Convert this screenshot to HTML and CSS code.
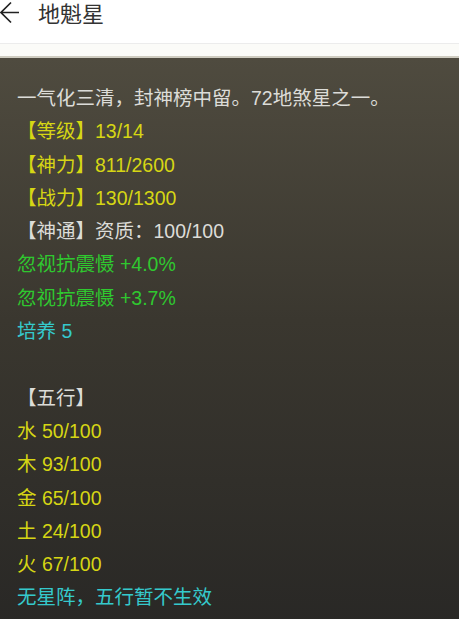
FILE: index.html
```html
<!DOCTYPE html>
<html lang="zh-CN">
  <head>
    <meta charset="UTF-8" />
    <meta name="viewport" content="width=device-width, initial-scale=1.0" />
    <title>地魁星</title>
    <link rel="stylesheet" href="styles.css">
  </head>
  <body>
    <div class="top-bar">
      <svg class="back-icon" width="20" height="26" viewBox="0 0 20 26">
        <path d="M19 12.5H1.2M11 2.5L1 12.5L11 22.5" fill="none" stroke="#222" stroke-width="1.7" />
      </svg>
      <div class="title">地魁星</div>
    </div>
    <div class="top-gap"></div>

    <div class="star-panel">
      <div class="line text-white">一气化三清，封神榜中留。72地煞星之一。</div>
      <div class="line text-yellow">【等级】13/14</div>
      <div class="line text-yellow">【神力】811/2600</div>
      <div class="line text-yellow">【战力】130/1300</div>
      <div class="line text-white">【神通】资质：100/100</div>
      <div class="line text-green">忽视抗震慑 +4.0%</div>
      <div class="line text-green">忽视抗震慑 +3.7%</div>
      <div class="line text-cyan">培养 5</div>
      <div class="line"></div>
      <div class="line text-white">【五行】</div>
      <div class="line text-yellow">水 50/100</div>
      <div class="line text-yellow">木 93/100</div>
      <div class="line text-yellow">金 65/100</div>
      <div class="line text-yellow">土 24/100</div>
      <div class="line text-yellow">火 67/100</div>
      <div class="line text-cyan">无星阵，五行暂不生效</div>
    </div>
  </body>
</html>
```

FILE: styles.css
```css
body {
  margin: 0;
  font-family: "Liberation Sans", "Noto Sans CJK SC", sans-serif;
  background-color: #262523;
}
.top-bar {
  height: 43px;
  background-color: #fff;
  border-bottom: 1px solid #ececec;
  display: flex;
  align-items: flex-start;
}
.back-icon {
  flex-shrink: 0;
}
.title {
  margin-left: 18px;
  font-family: "Noto Sans CJK SC", sans-serif;
  font-size: 22px;
  line-height: 25px;
  color: #333;
}
.top-gap {
  height: 12px;
  background-color: #fbfbf8;
  border-bottom: 2px solid #cfccc0;
}
.star-panel {
  min-height: 560px;
  padding: 24px 17px 0;
  background: linear-gradient(to bottom, #4f4b3f 0%, #3a372f 45%, #282725 100%);
  font-size: 19.5px;
}
.line {
  height: 33.3px;
  line-height: 33.3px;
  white-space: nowrap;
}
.text-white {
  color: #dcdcd8;
}
.text-yellow {
  color: #d6d614;
}
.text-green {
  color: #2fc82f;
}
.text-cyan {
  color: #35c9cc;
}
```
